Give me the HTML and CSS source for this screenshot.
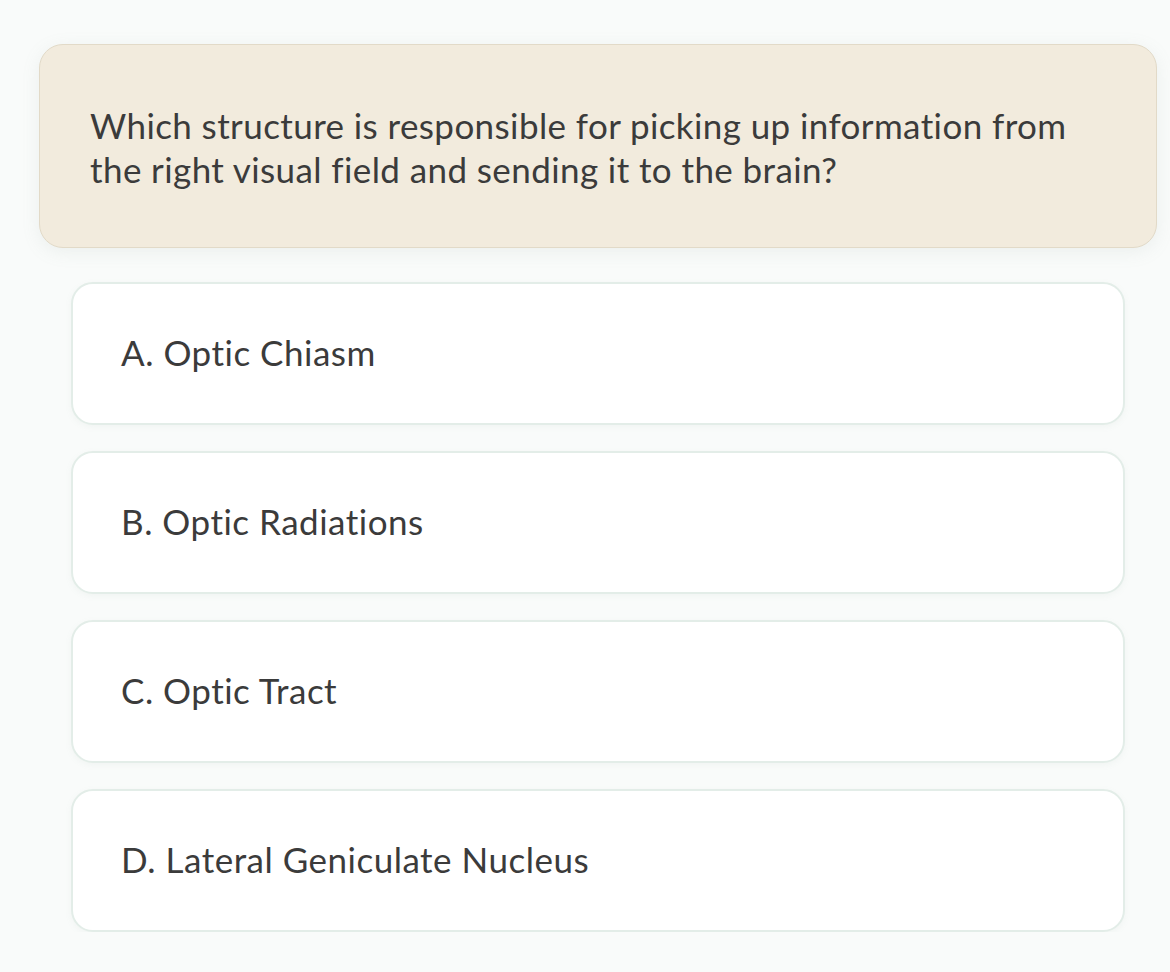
FILE: index.html
```html
<!DOCTYPE html>
<html lang="en">
<head>
<meta charset="utf-8">
<title>Quiz</title>
<link rel="stylesheet" href="styles.css">
</head>
<body>
<main class="quiz">
  <div class="question">
    <p class="question-text">Which structure is responsible for picking up information from the right visual field and sending it to the brain?</p>
  </div>
  <ul class="options">
    <li class="option">A. Optic Chiasm</li>
    <li class="option">B. Optic Radiations</li>
    <li class="option">C. Optic Tract</li>
    <li class="option">D. Lateral Geniculate Nucleus</li>
  </ul>
</main>
</body>
</html>
```
FILE: styles.css
```css
html, body {
  margin: 0;
  padding: 0;
  background: #f9fbfa;
}
body {
  font-family: "Lato", "Noto Sans", sans-serif;
  color: #3b3b3b;
}
.quiz {
  width: 1118px;
  padding: 44px 0 0 39px;
}
.question {
  box-sizing: border-box;
  height: 204px;
  background: #f2ebdd;
  border: 1px solid #e2dac8;
  border-radius: 24px;
  box-shadow: 0 4px 18px rgba(140, 160, 150, 0.12);
  padding: 0 50px;
  display: flex;
  align-items: center;
}
.question-text {
  margin: 2px 0 0 0;
  max-width: 1000px;
  font-size: 35px;
  letter-spacing: 0.4px;
  line-height: 44px;
}
.options {
  list-style: none;
  margin: 34px 32px 0 32px;
  padding: 0;
  display: flex;
  flex-direction: column;
  gap: 26px;
}
.option {
  box-sizing: border-box;
  height: 143px;
  background: #ffffff;
  border: 2px solid #e3ede8;
  border-radius: 22px;
  box-shadow: 0 2px 6px rgba(140, 160, 150, 0.08);
  padding: 0 48px 3px;
  display: flex;
  align-items: center;
  font-size: 35px;
  letter-spacing: 0.5px;
}
```
